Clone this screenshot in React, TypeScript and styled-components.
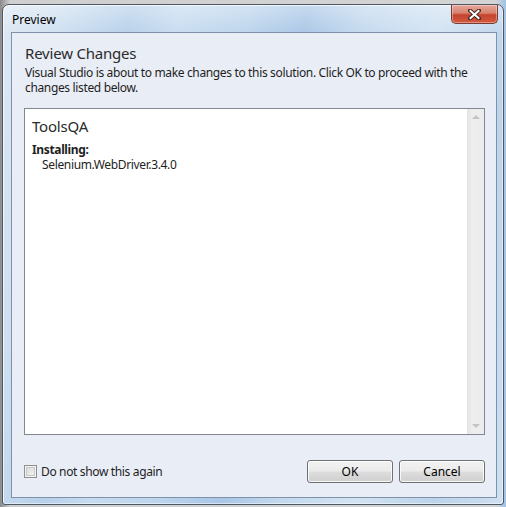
import React from "react";
import styled, { createGlobalStyle } from "styled-components";

const Global = createGlobalStyle`
  html, body { margin: 0; padding: 0; }
  body {
    width: 506px;
    height: 507px;
    overflow: hidden;
    background: linear-gradient(90deg, #8a8a8a 0%, #cfcfcf 2%, #d4d4d4 98%, #9fc2e6 100%);
    font-family: "Noto Sans", "Open Sans", sans-serif;
  }
`;

const Window = styled.div`
  box-sizing: border-box;
  margin: 4px 0 0 2px;
  width: 502px;
  height: 501px;
  border: 1px solid #4d5766;
  border-radius: 7px 7px 3px 3px;
  padding: 0 6px 6px 8px;
  display: flex;
  flex-direction: column;
  background:
    linear-gradient(180deg, rgba(255,255,255,0.35) 0%, rgba(255,255,255,0) 30px),
    linear-gradient(100deg, #dde8f3 0%, #cfe0f1 10%, #b7d0ea 22%, #c8dcf0 30%, #bcd4ec 42%, #a9c6e6 52%, #c4d9ee 62%, #d2e3f3 75%, #bcd3ea 88%, #cfe0f1 100%);
  box-shadow: inset 1px 1px 0 rgba(255,255,255,0.7), inset -1px -1px 0 rgba(255,255,255,0.5);
`;

const TitleBar = styled.div`
  height: 27px;
  display: flex;
  justify-content: space-between;
  align-items: flex-start;
`;

const Title = styled.span`
  padding: 8px 0 0 1px;
  font-size: 12px;
  line-height: 14px;
  color: #000;
`;

const CloseButton = styled.div`
  box-sizing: border-box;
  width: 47px;
  height: 19px;
  margin-right: -1px;
  border: 1px solid #7a3b35;
  border-top: none;
  border-radius: 0 0 5px 5px;
  background: linear-gradient(180deg, #e6a89a 0%, #d7826f 45%, #c4432d 55%, #d45a3f 100%);
  box-shadow: inset 0 0 0 1px rgba(255,255,255,0.35);
  display: flex;
  align-items: center;
  justify-content: center;
`;

const Client = styled.div`
  flex: 1;
  box-sizing: border-box;
  border: 1px solid #7f92aa;
  background: #e9edf6;
  padding: 10px 11px 14px 12px;
  display: flex;
  flex-direction: column;
  color: #1e1e1e;
`;

const Heading = styled.div`
  font-size: 15px;
  line-height: 20px;
  color: #2b2b2b;
  margin-left: 1px;
  letter-spacing: -0.2px;
`;

const Description = styled.div`
  font-size: 12px;
  line-height: 15px;
  margin: 2px 0 0 1px;
  letter-spacing: -0.35px;
`;

const ListBox = styled.div`
  flex: 1;
  margin-top: 13px;
  border: 1px solid #828790;
  background: #fff;
  display: flex;
`;

const ListContent = styled.div`
  flex: 1;
  padding: 7px 7px;
`;

const Project = styled.div`
  font-size: 15px;
  line-height: 20px;
  color: #2b2b2b;
  letter-spacing: -0.2px;
`;

const SectionLabel = styled.div`
  margin-top: 6px;
  font-size: 12px;
  line-height: 15px;
  font-weight: bold;
  letter-spacing: -0.35px;
`;

const Package = styled.div`
  padding-left: 10px;
  font-size: 12px;
  line-height: 15px;
  letter-spacing: -0.35px;
`;

const ScrollTrack = styled.div`
  width: 17px;
  background: linear-gradient(90deg, #e2e2e2 0%, #eeeeee 30%, #ececec 100%);
  display: flex;
  flex-direction: column;
  justify-content: space-between;
  align-items: center;
  padding: 6px 0;
`;

const Arrow = styled.div<{ $down?: boolean }>`
  width: 0;
  height: 0;
  border-left: 4px solid transparent;
  border-right: 4px solid transparent;
  ${(p) =>
    p.$down
      ? "border-top: 4px solid #c4c4c4;"
      : "border-bottom: 4px solid #c4c4c4;"}
`;

const Footer = styled.div`
  margin-top: 25px;
  height: 23px;
  display: flex;
  align-items: center;
  gap: 6px;
`;

const CheckLabel = styled.label`
  display: flex;
  align-items: center;
  gap: 4px;
  font-size: 12px;
  letter-spacing: -0.35px;
  margin-right: auto;
`;

const CheckBox = styled.span`
  box-sizing: border-box;
  width: 13px;
  height: 13px;
  border: 1px solid #8e8f8f;
  background: #f4f4f4;
  box-shadow: inset 0 0 0 1px #f4f4f4, inset 0 0 0 2px #c8c8c8;
  background-image: linear-gradient(135deg, #d6d6d6 0%, #f6f6f6 100%);
`;

const Button = styled.div<{ $w: number }>`
  box-sizing: border-box;
  width: ${(p) => p.$w}px;
  height: 23px;
  border: 1px solid #707070;
  border-radius: 3px;
  background: linear-gradient(180deg, #f2f2f2 0%, #ebebeb 48%, #dddddd 52%, #cfcfcf 100%);
  box-shadow: inset 0 0 0 1px rgba(255,255,255,0.8);
  display: flex;
  align-items: center;
  justify-content: center;
  font-size: 12px;
  color: #000;
`;

export default function App() {
  return (
    <>
      <Global />
      <Window>
        <TitleBar>
          <Title>Preview</Title>
          <CloseButton>
            <svg width="13" height="11" viewBox="0 0 13 11">
              <path
                d="M2 1.5 L11 9.5 M11 1.5 L2 9.5"
                stroke="#4a2a26"
                strokeWidth="4"
                strokeLinecap="square"
              />
              <path
                d="M2.5 2 L10.5 9 M10.5 2 L2.5 9"
                stroke="#ffffff"
                strokeWidth="2"
                strokeLinecap="square"
              />
            </svg>
          </CloseButton>
        </TitleBar>
        <Client>
          <Heading>Review Changes</Heading>
          <Description>
            Visual Studio is about to make changes to this solution. Click OK to proceed with the
            <br />
            changes listed below.
          </Description>
          <ListBox>
            <ListContent>
              <Project>ToolsQA</Project>
              <SectionLabel>Installing:</SectionLabel>
              <Package>Selenium.WebDriver.3.4.0</Package>
            </ListContent>
            <ScrollTrack>
              <Arrow />
              <Arrow $down />
            </ScrollTrack>
          </ListBox>
          <Footer>
            <CheckLabel>
              <CheckBox />
              Do not show this again
            </CheckLabel>
            <Button $w={86}>OK</Button>
            <Button $w={86}>Cancel</Button>
          </Footer>
        </Client>
      </Window>
    </>
  );
}
